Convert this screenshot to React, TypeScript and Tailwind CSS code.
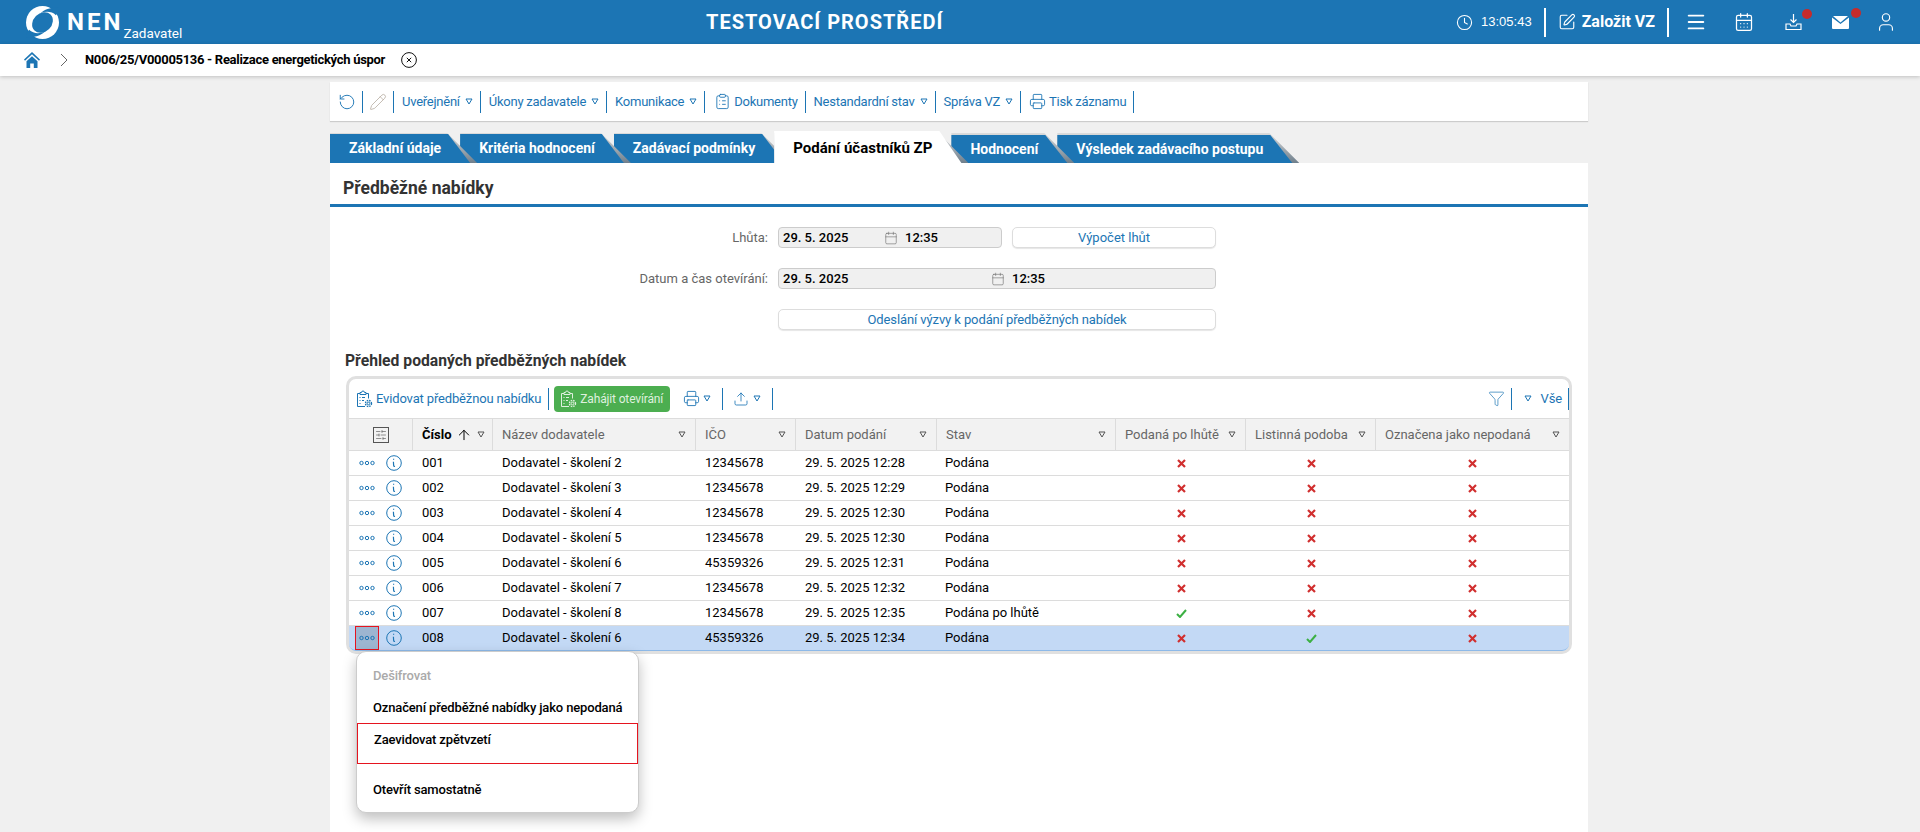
import { Calendar, CalendarDays, Clock, Menu, Pencil, Printer, RotateCcw, SquarePen, Upload, User, Filter, ClipboardList, ArrowUp, SlidersHorizontal } from "lucide-react";

type Row = { num: string; name: string; ico: string; date: string; state: string; late?: boolean; paper?: boolean };

const rows: Row[] = [
  { num: "001", name: "Dodavatel - školení 2", ico: "12345678", date: "29. 5. 2025 12:28", state: "Podána" },
  { num: "002", name: "Dodavatel - školení 3", ico: "12345678", date: "29. 5. 2025 12:29", state: "Podána" },
  { num: "003", name: "Dodavatel - školení 4", ico: "12345678", date: "29. 5. 2025 12:30", state: "Podána" },
  { num: "004", name: "Dodavatel - školení 5", ico: "12345678", date: "29. 5. 2025 12:30", state: "Podána" },
  { num: "005", name: "Dodavatel - školení 6", ico: "45359326", date: "29. 5. 2025 12:31", state: "Podána" },
  { num: "006", name: "Dodavatel - školení 7", ico: "12345678", date: "29. 5. 2025 12:32", state: "Podána" },
  { num: "007", name: "Dodavatel - školení 8", ico: "12345678", date: "29. 5. 2025 12:35", state: "Podána po lhůtě", late: true },
  { num: "008", name: "Dodavatel - školení 6", ico: "45359326", date: "29. 5. 2025 12:34", state: "Podána", paper: true }
];

const gridCols = "grid grid-cols-[64px_80px_203px_100px_141px_179px_130px_130px_193px]";

function Tri({ className = "text-[#1c75b4]" }: { className?: string }) {
  return (
    <svg width="8" height="7" viewBox="0 0 8 7" className={`shrink-0 ${className}`} fill="none" stroke="currentColor" strokeWidth="1">
      <path d="M1 1h6L4 6z" />
    </svg>
  );
}

function Sep({ className = "" }: { className?: string }) {
  return <span className={`h-[22px] w-px shrink-0 bg-[#1c75b4] ${className}`} />;
}

function Dots() {
  return (
    <svg width="16" height="6" viewBox="0 0 16 6" fill="none" stroke="#1c75b4" strokeWidth="1">
      <circle cx="2.5" cy="3" r="1.7" />
      <circle cx="8" cy="3" r="1.7" />
      <circle cx="13.5" cy="3" r="1.7" />
    </svg>
  );
}

function InfoIcon() {
  return (
    <svg width="16" height="16" viewBox="0 0 16 16" fill="none" stroke="#1c75b4">
      <circle cx="8" cy="8" r="7.3" strokeWidth="1" />
      <path d="M7.6 3.8v1M7.4 6.8c.2 1.6 0 3 .4 4.2.2.5.7.5 1.1.3" strokeWidth="1.2" />
    </svg>
  );
}

function Cross() {
  return (
    <svg width="9" height="9" viewBox="0 0 9 9" stroke="#d12f2f" strokeWidth="2.2">
      <path d="M1 1l7 7M8 1L1 8" />
    </svg>
  );
}

function Tick() {
  return (
    <svg width="11" height="9" viewBox="0 0 11 9" fill="none" stroke="#3cb043" strokeWidth="2">
      <path d="M1 5l3 3 6-7" />
    </svg>
  );
}

function GearClipboard() {
  return (
    <svg width="17" height="18" viewBox="0 0 17 18" fill="none" stroke="currentColor" strokeWidth="1" className="shrink-0">
      <path d="M9 16.5H1.5V3.5h2.5M10 3.5h2.5v5" />
      <path d="M4 4.5V2.5h1.5a1.5 1.5 0 0 1 3 0H10v2z" />
      <path d="M3.5 7.5h1M3.5 10.5h1M3.5 13.5h1M6 7.5h3M6 10.5h2" />
      <circle cx="12.5" cy="13.5" r="1.3" />
      <circle cx="12.5" cy="13.5" r="3" strokeDasharray="1.5 0.9" strokeWidth="1.4" />
    </svg>
  );
}

function Tab({ label, active, after, z, first }: { label: string; active?: boolean; after?: boolean; z: string; first?: boolean }) {
  return (
    <div className={`relative flex h-full items-center pr-[36px] pl-[19px] whitespace-nowrap ${first ? "" : "-ml-[17px]"} ${z}`}>
      <div className="absolute inset-0 top-0 bg-linear-to-b from-[#dcdcdc] to-[#6f7f8c] [clip-path:polygon(0_0,calc(100%-30px)_0,100%_100%,0_100%)]" />
      <div
        className={`absolute inset-x-0 bottom-0 [clip-path:polygon(0_0,calc(100%-29px)_0,calc(100%-7px)_100%,0_100%)] ${
          active ? "-top-[2px] bg-white" : after ? "top-[2px] -bottom-[1px] bg-[#1c75b4]" : "top-[1px] bg-[#1c75b4]"
        }`}
      />
      <span className={`relative font-bold ${active ? "text-[15px] text-black" : "text-[14px] text-white"} ${after ? "translate-y-[1px]" : ""}`}>{label}</span>
    </div>
  );
}

function HeadCell({ label, border = true }: { label: string; border?: boolean }) {
  return (
    <div className={`flex items-center justify-between pr-[9px] pl-[9px] text-[13px] text-[#666] ${border ? "border-r border-[#dcdcdc]" : ""}`}>
      <span>{label}</span>
      <Tri className="text-[#555]" />
    </div>
  );
}

export default function App() {
  return (
    <div className="flex h-[832px] flex-col overflow-hidden bg-[#f0f0f0] whitespace-nowrap [font-family:Roboto,sans-serif]">
      <header className="flex h-[44px] shrink-0 items-center bg-[#1c75b4] text-white">
        <div className="relative flex w-[706px] items-center pl-[26px]">
          <svg width="33" height="33" viewBox="0 0 32 32">
            <circle cx="16" cy="16" r="16" fill="white" />
            <ellipse cx="16" cy="16" rx="11" ry="9" transform="rotate(-45 16 16)" fill="#1c75b4" />
            <path d="M33 2C27 1 19 2 14 7 19 5 25 5 29 9 31 7 32 4 33 2z" fill="#1c75b4" />
            <path d="M-1 30C5 31 13 30 18 25 13 27 7 27 3 23 1 25 0 28-1 30z" fill="#1c75b4" />
          </svg>
          <span className="ml-[8px] text-[24px] leading-none font-bold tracking-[3px]">NEN</span>
          <span className="mt-[24px] ml-[0px] text-[13.5px] leading-none">Zadavatel</span>
        </div>
        <div className="text-[20px] font-bold tracking-[1px]">TESTOVACÍ PROSTŘEDÍ</div>
        <div className="ml-auto flex items-center pr-[23px]">
          <Clock size={17} strokeWidth={1.5} />
          <span className="ml-[8px] [font-family:Liberation_Sans,sans-serif] text-[13px]">13:05:43</span>
          <span className="mr-[12px] ml-[12px] h-[29px] w-[2px] bg-white" />
          <SquarePen size={18} strokeWidth={1.5} />
          <span className="ml-[6px] text-[16px] font-bold">Založit VZ</span>
          <span className="mr-[16px] ml-[12px] h-[29px] w-[2px] bg-white" />
          <Menu size={22} strokeWidth={2} />
          <span className="ml-[27px]"><CalendarDays size={20} strokeWidth={1.5} /></span>
          <span className="relative ml-[31px]">
            <svg width="17" height="18" viewBox="0 0 17 18" fill="none" stroke="white" strokeWidth="1.2">
              <path d="M8.5 1v8M5.5 6.5l3 3 3-3M1 11v5.5h15V11h-4l-1 2H6l-1-2z" />
            </svg>
            <span className="absolute -top-[4px] -right-[10px] h-[10px] w-[10px] rounded-full bg-[#c62b2b]" />
          </span>
          <span className="relative ml-[30px]">
            <svg width="17" height="13" viewBox="0 0 17 13" fill="white">
              <path d="M0 1.5V12a1 1 0 0 0 1 1h15a1 1 0 0 0 1-1V1.5L8.5 8z" />
              <path d="M1 0h15L8.5 6.5z" />
            </svg>
            <span className="absolute -top-[8px] -right-[12px] h-[10px] w-[10px] rounded-full bg-[#c62b2b]" />
          </span>
          <span className="ml-[26px]"><User size={22} strokeWidth={1.25} /></span>
        </div>
      </header>

      <div className="z-20 flex h-[32px] shrink-0 items-center bg-white pl-[24px] shadow-[0_1px_4px_rgba(0,0,0,0.2)]">
        <svg width="16" height="16" viewBox="0 0 16 16" fill="#1c75b4">
          <path d="M8 0L0 7.5l1 1.2L8 2.3l7 6.4 1-1.2z" />
          <path d="M2.5 9.2L8 4.2l5.5 5V16H9.8v-4.5H6.2V16H2.5z" />
        </svg>
        <svg width="8" height="14" viewBox="0 0 8 14" fill="none" stroke="#666" strokeWidth="1" className="ml-[20px]">
          <path d="M1 1l6 6-6 6" />
        </svg>
        <span className="ml-[17px] text-[13px] font-bold tracking-[-0.3px] text-black">N006/25/V00005136 - Realizace energetických úspor</span>
        <svg width="16" height="16" viewBox="0 0 16 16" fill="none" stroke="#111" className="ml-[16px]">
          <circle cx="8" cy="8" r="7.4" strokeWidth="1" />
          <path d="M5.8 5.8l4.4 4.4M10.2 5.8l-4.4 4.4" strokeWidth="1" />
        </svg>
      </div>

      <main className="ml-[330px] flex w-[1258px] flex-1 flex-col">
        <div className="mt-[6px] flex h-[39px] shrink-0 items-center bg-white pl-[8px] text-[13px] tracking-[-0.25px] text-[#1c75b4] shadow-[0_1px_1px_rgba(0,0,0,0.15)]">
          <RotateCcw size={18} strokeWidth={1.25} />
          <Sep className="ml-[6px]" />
          <Pencil size={18} strokeWidth={1} className="ml-[6px] text-[#b0a59a]" />
          <Sep className="ml-[6px]" />
          <span className="ml-[8px]">Uveřejnění</span>
          <Tri className="ml-[5px] text-[#1c75b4]" />
          <Sep className="ml-[7px]" />
          <span className="ml-[8px]">Úkony zadavatele</span>
          <Tri className="ml-[5px]" />
          <Sep className="ml-[7px]" />
          <span className="ml-[8px]">Komunikace</span>
          <Tri className="ml-[5px]" />
          <Sep className="ml-[7px]" />
          <ClipboardList size={17} strokeWidth={1.25} className="ml-[9px]" />
          <span className="ml-[3px]">Dokumenty</span>
          <Sep className="ml-[7px]" />
          <span className="ml-[8px]">Nestandardní stav</span>
          <Tri className="ml-[5px]" />
          <Sep className="ml-[7px]" />
          <span className="ml-[8px]">Správa VZ</span>
          <Tri className="ml-[5px]" />
          <Sep className="ml-[7px]" />
          <Printer size={17} strokeWidth={1.25} className="ml-[8px]" />
          <span className="ml-[3px]">Tisk záznamu</span>
          <Sep className="ml-[7px]" />
        </div>

        <div className="mt-[12px] flex h-[30px] shrink-0">
          <Tab label="Základní údaje" z="z-[7]" first />
          <Tab label="Kritéria hodnocení" z="z-[6]" />
          <Tab label="Zadávací podmínky" z="z-[5]" />
          <Tab label="Podání účastníků ZP" z="z-[8]" active />
          <Tab label="Hodnocení" z="z-[3]" after />
          <Tab label="Výsledek zadávacího postupu" z="z-[2]" after />
        </div>

        <section className="flex-1 bg-white">
          <h1 className="flex h-[44px] items-center border-b-[3px] border-[#1c75b4] pt-[9px] pl-[13px] text-[17.5px] font-bold text-[#333]">Předběžné nabídky</h1>

          <div className="mt-[20px] flex h-[21px] items-center">
            <label className="w-[438px] text-right text-[13px] text-[#666]">Lhůta:</label>
            <div className="ml-[10px] flex h-full w-[224px] items-center rounded-[4px] border border-[#ccc] bg-[#f0f0f0] pl-[4px] text-[13px] font-medium text-black">
              <span className="w-[101px]">29. 5. 2025</span>
              <Calendar size={14} strokeWidth={1} className="text-[#666]" />
              <span className="ml-[7px]">12:35</span>
            </div>
            <button className="ml-[10px] h-full w-[204px] rounded-[5px] border border-[#ddd] bg-white text-[13px] text-[#1c75b4] shadow-[0_1px_1px_rgba(0,0,0,0.1)]">Výpočet lhůt</button>
          </div>

          <div className="mt-[20px] flex h-[21px] items-center">
            <label className="w-[438px] text-right text-[13px] text-[#666]">Datum a čas otevírání:</label>
            <div className="ml-[10px] flex h-full w-[438px] items-center rounded-[4px] border border-[#ccc] bg-[#f0f0f0] pl-[4px] text-[13px] font-medium text-black">
              <span className="w-[208px]">29. 5. 2025</span>
              <Calendar size={14} strokeWidth={1} className="text-[#666]" />
              <span className="ml-[7px]">12:35</span>
            </div>
          </div>

          <button className="mt-[20px] ml-[448px] h-[21px] w-[438px] rounded-[5px] border border-[#ddd] bg-white text-[13px] tracking-[-0.1px] text-[#1c75b4] shadow-[0_1px_1px_rgba(0,0,0,0.1)]">
            Odeslání výzvy k podání předběžných nabídek
          </button>

          <h2 className="mt-[20px] h-[20px] pl-[15px] text-[15.7px] leading-[20px] font-bold text-[#333]">Přehled podaných předběžných nabídek</h2>

          <div className="relative mt-[5px] ml-[16px] w-[1226px] rounded-[10px] border-[3px] border-[#e0e0e0]">
            <div className="flex h-[39px] items-center pl-[7px] text-[13px] tracking-[-0.15px] text-[#1c75b4]">
              <GearClipboard />
              <span className="ml-[3px]">Evidovat předběžnou nabídku</span>
              <Sep className="ml-[7px]" />
              <button className="ml-[5px] flex h-[26px] w-[116px] items-center justify-start rounded-[4px] bg-[#4cae50] pl-[6px] text-[12px] text-[#dff0df]">
                <GearClipboard />
                <span className="ml-[3px]">Zahájit otevírání</span>
              </button>
              <Printer size={17} strokeWidth={1.25} className="ml-[13px]" />
              <Tri className="ml-[3px]" />
              <Sep className="ml-[11px]" />
              <Upload size={16} strokeWidth={1.25} className="ml-[10px]" />
              <Tri className="ml-[4px]" />
              <Sep className="ml-[11px]" />
              <Filter size={17} strokeWidth={1} className="ml-auto" />
              <Sep className="ml-[6px]" />
              <Tri className="ml-[12px]" />
              <span className="ml-[9px]">Vše</span>
              <Sep className="ml-[6px] mr-[0px]" />
            </div>

            <div className={`${gridCols} h-[33px] border-y border-[#dcdcdc] bg-[#f2f2f2]`}>
              <div className="flex items-center justify-center border-r border-[#dcdcdc]">
                <span className="flex h-[16px] w-[16px] items-center justify-center border border-[#555] text-[#555]">
                  <SlidersHorizontal size={12} strokeWidth={1.25} />
                </span>
              </div>
              <div className="flex items-center border-r border-[#dcdcdc] pl-[9px] text-[13px] font-bold text-black">
                <span>Číslo</span>
                <ArrowUp size={16} strokeWidth={1.5} className="ml-[4px]" />
                <Tri className="ml-[5px] text-[#555]" />
              </div>
              <HeadCell label="Název dodavatele" />
              <HeadCell label="IČO" />
              <HeadCell label="Datum podání" />
              <HeadCell label="Stav" />
              <HeadCell label="Podaná po lhůtě" />
              <HeadCell label="Listinná podoba" />
              <HeadCell label="Označena jako nepodaná" border={false} />
            </div>

            {rows.map((row, i) => {
              const selected = i === rows.length - 1;
              return (
                <div
                  key={row.num}
                  className={`${gridCols} h-[25px] items-center text-[13px] text-black ${
                    selected ? "rounded-b-[7px] border-b border-[#8db9e8] bg-[#c3d9f5]" : "border-b border-[#dcdcdc]"
                  }`}
                >
                  <div className="flex h-full items-center pl-[6px]">
                    <span className={`flex h-full w-[24px] items-center justify-center ${selected ? "border border-[#e5141f] bg-[#9db5d0]" : ""}`}>
                      <Dots />
                    </span>
                    <span className="ml-[7px] flex"><InfoIcon /></span>
                  </div>
                  <div className="pl-[9px]">{row.num}</div>
                  <div className="pl-[9px]">{row.name}</div>
                  <div className="pl-[9px]">{row.ico}</div>
                  <div className="pl-[9px]">{row.date}</div>
                  <div className="pl-[8px]">{row.state}</div>
                  <div className="flex justify-center">{row.late ? <Tick /> : <Cross />}</div>
                  <div className="flex justify-center">{row.paper ? <Tick /> : <Cross />}</div>
                  <div className="flex justify-center"><Cross /></div>
                </div>
              );
            })}

            <div className="absolute top-[272px] left-[7px] z-30 h-[162px] w-[283px] rounded-[10px] border border-[#ccc] bg-white pt-[8px] text-[13px] font-medium tracking-[-0.15px] text-black shadow-[0_6px_14px_rgba(0,0,0,0.25)]">
              <div className="flex h-[32px] items-center pl-[16px] text-[#aaa]">Dešifrovat</div>
              <div className="flex h-[31px] items-center pl-[16px]">Označení předběžné nabídky jako nepodaná</div>
              <div className="h-[41px] border border-[#e5141f] pt-[6px] pl-[16px]">Zaevidovat zpětvzetí</div>
              <div className="mt-[10px] flex h-[32px] items-center pl-[16px]">Otevřít samostatně</div>
            </div>
          </div>
        </section>
      </main>
    </div>
  );
}
